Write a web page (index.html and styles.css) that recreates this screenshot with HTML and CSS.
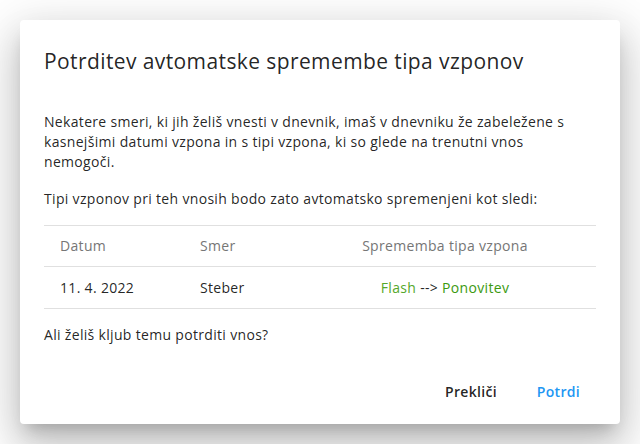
FILE: index.html
```html
<!DOCTYPE html>
<html lang="sl">
<head>
<meta charset="utf-8">
<link rel="stylesheet" href="styles.css">
</head>
<body>
<div class="dialog">
  <h2 class="title">Potrditev avtomatske spremembe tipa vzponov</h2>
  <div class="content">
    <p class="para">Nekatere smeri, ki jih želiš vnesti v dnevnik, imaš v dnevniku že zabeležene s kasnejšimi datumi vzpona in s tipi vzpona, ki so glede na trenutni vnos nemogoči.</p>
    <p class="para lead">Tipi vzponov pri teh vnosih bodo zato avtomatsko spremenjeni kot sledi:</p>
    <table class="table">
      <thead>
        <tr><th class="c1">Datum</th><th class="c2">Smer</th><th class="c3">Sprememba tipa vzpona</th></tr>
      </thead>
      <tbody>
        <tr><td class="c1">11. 4. 2022</td><td class="c2">Steber</td><td class="c3"><span class="g1">Flash</span> --&gt; <span class="g2">Ponovitev</span></td></tr>
      </tbody>
    </table>
    <p class="para">Ali želiš kljub temu potrditi vnos?</p>
  </div>
  <div class="actions">
    <button class="btn cancel">Prekliči</button>
    <button class="btn confirm">Potrdi</button>
  </div>
</div>
</body>
</html>
```
FILE: styles.css
```css
* { box-sizing: border-box; }
html, body { margin: 0; padding: 0; background: #fff; }
body {
  font-family: "Open Sans", "Liberation Sans", sans-serif;
  color: rgba(0,0,0,0.87);
  padding: 20px;
  letter-spacing: 0.32px;
}
.dialog {
  width: 600px;
  height: 404px;
  background: #fff;
  border-radius: 4px;
  box-shadow: 0 11px 15px -7px rgba(0,0,0,0.2), 0 24px 38px 3px rgba(0,0,0,0.14), 0 9px 46px 8px rgba(0,0,0,0.12);
  display: flex;
  flex-direction: column;
}
.title {
  margin: 0;
  padding: 25px 24px 0;
  font-size: 21px;
  font-weight: 500;
  line-height: 32px;
  letter-spacing: 0.4px;
}
.content {
  padding: 35px 24px 0;
  flex: 1;
}
.para {
  margin: 0 0 17px;
  font-size: 14px;
  line-height: 20px;
}
.para.lead { margin-bottom: 16px; }
.table {
  width: 100%;
  border-collapse: collapse;
  margin: 0 0 16px;
  font-size: 14px;
}
.table th, .table td {
  border-top: 1px solid #e0e0e0;
  border-bottom: 1px solid #e0e0e0;
  text-align: left;
  padding: 0 16px;
  line-height: 20px;
}
.table th { height: 41px; font-weight: 400; color: #767676; }
.table td { height: 42px; }
.c1 { width: 140px; }
.c2 { width: 110px; }
.table .c3 { text-align: center; }
.g1 { color: #55a82a; }
.g2 { color: #3c9a10; }
.actions {
  display: flex;
  justify-content: flex-end;
  gap: 8px;
  padding: 0 24px 14px;
}
.btn {
  border: none;
  background: none;
  font-family: inherit;
  font-size: 14px;
  font-weight: 600;
  letter-spacing: 0.3px;
  padding: 6px 16px;
  line-height: 24px;
  cursor: pointer;
}
.cancel { color: rgba(0,0,0,0.87); }
.confirm { color: #2196f3; }
```
